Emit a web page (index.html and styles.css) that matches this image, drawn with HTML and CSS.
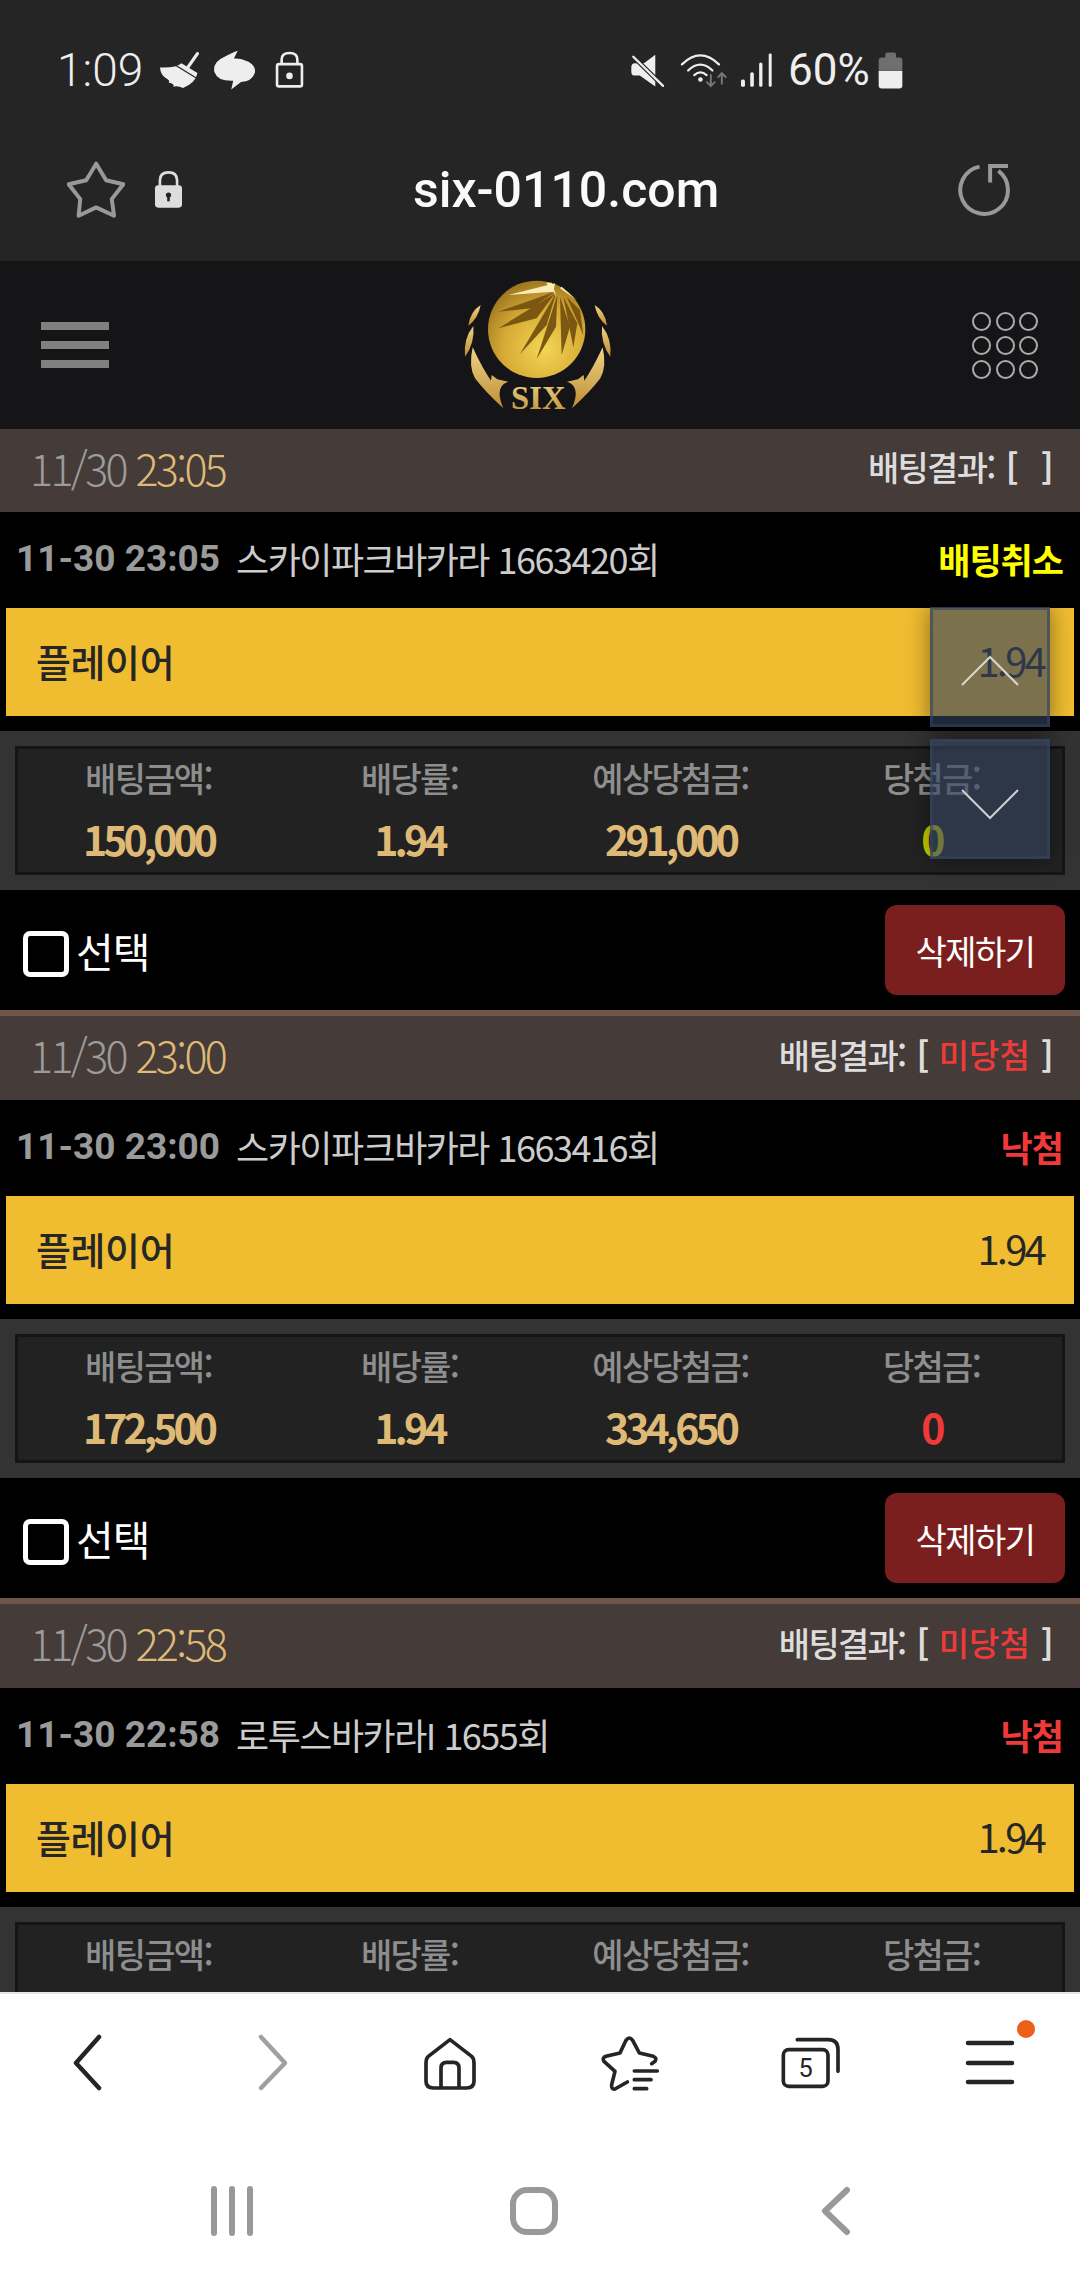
FILE: index.html
```html
<!DOCTYPE html>
<html lang="ko">
<head>
<meta charset="utf-8">
<title>six-0110.com</title>
<link rel="stylesheet" href="styles.css">
</head>
<body>
<div class="screen">
  <header class="chrome">
    <div class="status">
      <span class="clock">1:09</span>
      <svg class="ic-broom" viewBox="475 68 128 116"><path d="M478 118Q530 120 545 105L595 135Q590 165 550 182Q535 175 520 178Q525 170 505 165Q512 160 495 150Q480 140 478 118Z" fill="#eee"/><path d="M595 75L565 118" stroke="#eee" stroke-width="10" stroke-linecap="round"/><path d="M528 112L590 150" stroke="#252525" stroke-width="4"/></svg>
      <svg class="ic-swirl" viewBox="636 64 132 122"><path d="M712 66L700 90Q720 88 745 100Q770 115 764 135Q755 160 722 162L692 185L698 158Q650 160 640 130Q635 100 670 85Q695 72 712 66Z" fill="#eee"/></svg>
      <svg class="ic-lock" viewBox="820 66 88 116"><rect x="826" y="106" width="76" height="68" rx="6" fill="none" stroke="#eee" stroke-width="8"/><path d="M840 106V92Q840 72 864 72Q888 72 888 92V106" fill="none" stroke="#eee" stroke-width="8"/><circle cx="864" cy="142" r="10" fill="#eee"/></svg>
      <svg class="ic-mute" viewBox="95 70 105 105"><path d="M170 74L135 100H107Q96 100 96 112V126Q96 138 107 138H122L170 172Z" fill="#eee"/><path d="M100 78L194 170" stroke="#252525" stroke-width="14"/><path d="M102 80L194 170" stroke="#eee" stroke-width="7" stroke-linecap="round"/></svg>
      <svg class="ic-wifi" viewBox="240 68 148 112" fill="none" stroke-linecap="round"><g stroke="#eee" stroke-width="7"><path d="M246 105Q303 50 360 105"/><path d="M265 124Q303 88 340 124"/><path d="M284 138Q303 122 322 138"/></g><circle cx="303" cy="152" r="7" fill="#eee"/><g stroke="#777" stroke-width="6"><path d="M335 138V172M323 160L335 172L347 160"/><path d="M369 165V132M358 144L369 132L381 144"/></g></svg>
      <svg class="ic-signal" viewBox="415 70 100 102" fill="#eee"><rect x="418" y="150" width="12" height="22" rx="5"/><rect x="446" y="128" width="11" height="44" rx="5"/><rect x="473" y="98" width="10" height="74" rx="5"/><rect x="502" y="71" width="9" height="101" rx="4"/></svg>
      <span class="batt-text">60%</span>
      <svg class="ic-batt" viewBox="830 68 75 110"><path d="M832 122V92Q832 84 842 84H852V74Q852 69 858 69H878Q884 69 884 74V84H894Q903 84 903 92V122Z" fill="#6f6f6f"/><path d="M832 124H903V168Q903 177 894 177H841Q832 177 832 168Z" fill="#eee"/></svg>
    </div>
    <div class="urlbar">
      <svg class="ic-star" viewBox="200 390 175 175"><path d="M288 398L318 448L370 460L335 505L342 555L288 530L235 555L240 505L205 460L258 448Z" fill="none" stroke="#999" stroke-width="12" stroke-linejoin="round"/></svg>
      <svg class="ic-padlock" viewBox="460 420 88 116"><path d="M478 470V450Q478 426 504 426Q530 426 530 450V470" fill="none" stroke="#ddd" stroke-width="8"/><rect x="463" y="465" width="82" height="68" rx="10" fill="#ddd"/><circle cx="504" cy="495" r="8" fill="#252525"/><rect x="500" y="495" width="8" height="19" fill="#252525"/></svg>
      <span class="url">six-0110.com</span>
      <svg class="ic-reload" viewBox="1072 398 160 158" fill="none" stroke="#999" stroke-width="12"><path d="M1140 408A72 72 0 1 0 1197 421"/><path d="M1226 406H1172V456"/></svg>
    </div>
  </header>

  <main class="content">
    <div class="sitehead">
      <div class="burger"><i></i><i></i><i></i></div>
      <svg class="logo" viewBox="0 3 723 504">
        <defs>
          <radialGradient id="gb" cx="58%" cy="70%" r="78%"><stop offset="0" stop-color="#f3d655"/><stop offset=".55" stop-color="#d6aa34"/><stop offset="1" stop-color="#8f6a1a"/></radialGradient>
          <linearGradient id="gg" x1="0" y1="0" x2="0" y2="1"><stop offset="0" stop-color="#efd283"/><stop offset="1" stop-color="#bd8f36"/></linearGradient>
          <g id="wing"><path d="M182 135Q150 155 145 197Q175 175 182 135Z"/><path d="M160 198Q130 235 135 290Q165 250 160 198Z"/><path d="M158 262Q145 320 165 355Q195 395 250 445Q235 410 240 390Q245 370 265 365L232 358L215 345L213 362Q190 330 158 262Z"/></g>
        </defs>
        <circle cx="350" cy="208" r="146" fill="url(#gb)"/>
        <g fill="#f9ecb6"><path d="M405 70L265 105L400 95Z"/><path d="M420 85L470 120L425 80Z"/><path d="M378 68L410 110L395 68Z"/></g>
        <g fill="#7c5712"><path d="M405 95L235 155L335 145Z"/><path d="M405 100L235 205L350 175Z"/><path d="M408 100L300 282L380 195Z"/><path d="M412 105L350 297L408 200Z"/><path d="M420 110L425 285L450 200Z"/><path d="M430 110L460 262L472 190Z"/><path d="M440 110L490 225L480 150Z"/></g>
        <use href="#wing" fill="url(#gg)"/>
        <use href="#wing" fill="url(#gg)" transform="translate(706 0) scale(-1 1)"/>
        <text class="logo-text" x="355" y="447" text-anchor="middle" fill="url(#gg)">SIX</text>
      </svg>
      <div class="dots"><i></i><i></i><i></i><i></i><i></i><i></i><i></i><i></i><i></i></div>
    </div>

    <section class="bet">
      <div class="bet-head">
        <div class="when">11/30 <b>23:05</b></div>
        <div class="result">배팅결과: <span class="br">[</span><span class="res-gap"></span><span class="br">]</span></div>
      </div>
      <div class="bet-row">
        <div class="game"><b>11-30 23:05</b><span>스카이파크바카라 1663420회</span></div>
        <div class="state cancel">배팅취소</div>
      </div>
      <div class="pick"><span>플레이어</span><span class="odds">1.94</span></div>
      <div class="panel"><div class="grid">
        <div class="cell"><span class="lab">배팅금액:</span><span class="val">150,000</span></div>
        <div class="cell"><span class="lab">배당률:</span><span class="val">1.94</span></div>
        <div class="cell"><span class="lab">예상당첨금:</span><span class="val">291,000</span></div>
        <div class="cell"><span class="lab">당첨금:</span><span class="val zero-y">0</span></div>
      </div></div>
      <div class="actions">
        <div class="select"><i class="check"></i><span>선택</span></div>
        <div class="del">삭제하기</div>
      </div>
    </section>

    <section class="bet">
      <div class="bet-head">
        <div class="when">11/30 <b>23:00</b></div>
        <div class="result">배팅결과: <span class="br">[</span><em>미당첨</em><span class="br">]</span></div>
      </div>
      <div class="bet-row">
        <div class="game"><b>11-30 23:00</b><span>스카이파크바카라 1663416회</span></div>
        <div class="state lost">낙첨</div>
      </div>
      <div class="pick"><span>플레이어</span><span class="odds">1.94</span></div>
      <div class="panel"><div class="grid">
        <div class="cell"><span class="lab">배팅금액:</span><span class="val">172,500</span></div>
        <div class="cell"><span class="lab">배당률:</span><span class="val">1.94</span></div>
        <div class="cell"><span class="lab">예상당첨금:</span><span class="val">334,650</span></div>
        <div class="cell"><span class="lab">당첨금:</span><span class="val zero-r">0</span></div>
      </div></div>
      <div class="actions">
        <div class="select"><i class="check"></i><span>선택</span></div>
        <div class="del">삭제하기</div>
      </div>
    </section>

    <section class="bet">
      <div class="bet-head">
        <div class="when">11/30 <b>22:58</b></div>
        <div class="result">배팅결과: <span class="br">[</span><em>미당첨</em><span class="br">]</span></div>
      </div>
      <div class="bet-row">
        <div class="game"><b>11-30 22:58</b><span>로투스바카라I 1655회</span></div>
        <div class="state lost">낙첨</div>
      </div>
      <div class="pick"><span>플레이어</span><span class="odds">1.94</span></div>
      <div class="panel"><div class="grid">
        <div class="cell"><span class="lab">배팅금액:</span></div>
        <div class="cell"><span class="lab">배당률:</span></div>
        <div class="cell"><span class="lab">예상당첨금:</span></div>
        <div class="cell"><span class="lab">당첨금:</span></div>
      </div></div>
    </section>

    <button class="scroll up"><svg viewBox="0 0 114 114"><path d="M29 75L57 47L85 75" fill="none" stroke="#d8d8d0" stroke-width="2"/></svg></button>
    <button class="scroll down"><svg viewBox="0 0 114 114"><path d="M29 48L57 76L85 48" fill="none" stroke="#d0d0d0" stroke-width="2"/></svg></button>
  </main>

  <nav class="toolbar">
    <svg class="tb shift-r" viewBox="0 0 60 60"><path d="M26 4L3 30L26 55" fill="none" stroke="#252525" stroke-width="4.5" stroke-linecap="round" stroke-linejoin="round"/></svg>
    <svg class="tb" viewBox="0 0 60 60"><path d="M21 4L45 30L21 55" fill="none" stroke="#a0a0a0" stroke-width="4.5" stroke-linecap="round" stroke-linejoin="round"/></svg>
    <svg class="tb" viewBox="1260 100 180 180"><path d="M1350 120L1415 170Q1422 176 1422 190V245Q1422 265 1400 265H1300Q1278 265 1278 245V190Q1278 176 1285 170Z" fill="none" stroke="#252525" stroke-width="11" stroke-linejoin="round"/><path d="M1323 262V205Q1323 188 1340 188H1360Q1377 188 1377 205V262" fill="none" stroke="#252525" stroke-width="11"/></svg>
    <svg class="tb" viewBox="300 100 180 180" fill="none" stroke="#252525" stroke-width="11" stroke-linecap="round" stroke-linejoin="round"><path d="M382 247L345 268Q333 270 335 255L345 215L312 185Q305 175 318 170L360 160L378 122Q388 108 398 122L418 160L460 170Q472 175 465 185L455 192"/><path d="M403 214H472M403 240H453M403 267H440"/></svg>
    <svg class="tb" viewBox="840 105 180 180"><rect x="850" y="155" width="134" height="110" rx="16" fill="none" stroke="#252525" stroke-width="11"/><path d="M892 125H985Q1014 125 1014 155V220" fill="none" stroke="#252525" stroke-width="11" stroke-linecap="round"/><text class="tab-num" x="917" y="236" text-anchor="middle" fill="#252525">5</text></svg>
    <div class="menu"><svg class="tb" viewBox="0 0 60 60"><path d="M8 10H52M8 30H52M8 49H52" stroke="#252525" stroke-width="4.5" stroke-linecap="round"/></svg><i class="badge"></i></div>
  </nav>

  <nav class="sysnav">
    <svg class="sys" viewBox="0 0 60 60"><path d="M12 8V52M30 8V52M48 8V52" stroke="#999" stroke-width="6" stroke-linecap="round"/></svg>
    <svg class="sys" viewBox="0 0 60 60"><rect x="9" y="9" width="42" height="42" rx="14" fill="none" stroke="#999" stroke-width="6"/></svg>
    <svg class="sys" viewBox="0 0 60 60"><path d="M41 9L19 30L41 51" fill="none" stroke="#999" stroke-width="6" stroke-linecap="round" stroke-linejoin="round"/></svg>
  </nav>
</div>
</body>
</html>
```
FILE: styles.css
```css
* { box-sizing: border-box; }
html, body { margin: 0; padding: 0; }
body { background: #000; font-family: "Noto Sans CJK KR", "Noto Sans", sans-serif; }
svg { display: block; flex: none; }

.screen { width: 1080px; height: 2280px; display: flex; flex-direction: column; overflow: hidden; position: relative; }

/* browser chrome */
.chrome { background: #252525; height: 261px; flex: none; }
.status { height: 130px; padding: 10px 0 0 57px; display: flex; align-items: center; color: #eee; font-family: Roboto, sans-serif; font-weight: 300; font-size: 46px; }
.clock { width: 102px; }
.ic-broom { width: 41px; height: 38px; }
.ic-swirl { width: 43px; height: 40px; margin-left: 13px; }
.ic-lock { width: 29px; height: 38px; margin-left: 19px; }
.ic-mute { width: 34px; height: 35px; margin-left: 327px; }
.ic-wifi { width: 48px; height: 37px; margin-left: 15px; }
.ic-signal { width: 33px; height: 34px; margin-left: 12px; }
.batt-text { width: 90px; margin-left: 15px; font-weight: 400; font-size: 44px; }
.ic-batt { width: 25px; height: 37px; }

.urlbar { height: 131px; padding-bottom: 12px; display: flex; align-items: center; padding-left: 67px; padding-right: 70px; }
.ic-star { width: 58px; height: 58px; }
.ic-padlock { width: 29px; height: 39px; margin-left: 29px; }
.url { margin-left: 230px; color: #fafafa; font-family: Roboto, sans-serif; font-weight: 500; font-size: 50px; }
.ic-reload { width: 53px; height: 53px; margin-left: auto; }

/* page */
.content { flex: 1; min-height: 0; overflow: hidden; position: relative; background: #000; }
.sitehead { height: 168px; background: #151518; display: grid; grid-template-columns: 68px 1fr 66px; align-items: center; padding: 0 42px 0 41px; }
.burger { display: flex; flex-direction: column; gap: 11px; }
.burger i { display: block; height: 8px; background: #808080; }
.logo { width: 241px; height: 168px; justify-self: center; }
.logo-text { font-family: "Liberation Serif", serif; font-weight: 700; font-size: 98px; }
.dots { display: grid; grid-template-columns: repeat(3, 19px); gap: 5px 4.5px; }
.dots i { display: block; height: 19px; border: 2.5px solid #aaa; border-radius: 50%; }

.bet { border-top: 6px solid #705648; }
.bet:first-of-type { border-top: 0; }
.bet-head { height: 84px; background: #453b39; display: flex; align-items: center; justify-content: space-between; padding: 0 28px 8px 30px; }
.bet:first-of-type .bet-head { height: 83px; }
.when { font-size: 43px; letter-spacing: -2.6px; font-weight: 300; color: #9c9c9c; }
.when b { font-weight: 300; color: #dfba76; }
.result { display: flex; align-items: center; font-size: 34px; font-weight: 500; letter-spacing: -1.7px; color: #ddd; }
.result em { font-style: normal; color: #f03a3a; margin: 0 11px; letter-spacing: 0; font-size: 33px; }
.res-gap { width: 13px; }
.br { margin-left: 11px; color: #ddd; font-weight: 700; }
.result em + .br { margin-left: 0; }

.bet-row { height: 96px; display: flex; align-items: center; justify-content: space-between; padding: 0 17px 4px 16px; }
.game { display: flex; align-items: center; }
.game b { font-family: Roboto, sans-serif; font-weight: 700; font-size: 37px; color: #9a9a9a; }
.game span { margin-left: 16px; font-size: 36px; letter-spacing: -1.5px; color: #ccc; }
.state { font-size: 35px; font-weight: 700; letter-spacing: -1px; }
.cancel { color: #ff0; }
.lost { color: #f03a3a; }

.pick { height: 108px; margin: 0 6px; background: #f0bd31; display: flex; align-items: center; justify-content: space-between; padding: 0 30px 4px 30px; color: #262626; font-size: 38px; font-weight: 500; letter-spacing: -.4px; }
.odds { font-size: 40px; font-weight: 400; letter-spacing: -2.8px; }
.panel { margin-top: 15px; height: 159px; background: #333; padding: 15px; }
.grid { height: 129px; background: #222; border: 3px solid #151515; display: grid; grid-template-columns: repeat(4, 1fr); }
.cell { display: flex; flex-direction: column; align-items: center; }
.lab { margin-top: -1px; height: 60px; line-height: 60px; font-size: 34px; font-weight: 500; letter-spacing: -1.7px; color: #8e8e8e; }
.val { height: 60px; line-height: 60px; font-size: 41px; font-weight: 700; letter-spacing: -3.9px; color: #dfba76; }
.zero-y { color: #cfcf00; }
.zero-r { color: #f03a3a; }

.actions { height: 120px; display: flex; align-items: center; justify-content: space-between; padding: 0 15px 0 23px; }
.select { display: flex; align-items: center; color: #fff; font-size: 41px; }
.check { display: block; width: 46px; height: 46px; border: 5px solid #fff; border-radius: 7px; margin-top: 8px; }
.select span { margin-left: 7px; letter-spacing: -1px; }
.del { width: 180px; height: 90px; background: #7a1f1e; border-radius: 12px; display: flex; align-items: center; justify-content: center; color: #fff; font-size: 34px; letter-spacing: -1.5px; }

/* floating scroll buttons over the page */
.scroll { position: absolute; left: 930px; width: 120px; height: 120px; padding: 0; background: rgba(52, 68, 95, .62); border: 3px solid rgba(52, 68, 95, .6); box-shadow: 0 0 22px rgba(0, 0, 0, .45); }
.scroll svg { width: 114px; height: 114px; }
.up { top: 346px; }
.down { top: 478px; }

/* browser toolbar */
.toolbar { height: 155px; flex: none; background: #fff; border-top: 2px solid #e6e6e6; display: grid; grid-template-columns: repeat(6, 180px); align-items: center; justify-items: center; padding-bottom: 15px; }
.tb { width: 60px; height: 60px; }
.shift-r { margin-left: 26px; }
.menu { position: relative; }
.badge { position: absolute; left: 57px; top: -13px; width: 18px; height: 18px; background: #ec5f18; border-radius: 50%; }
.sysnav { height: 133px; flex: none; background: #fff; display: grid; grid-template-columns: repeat(3, 302px); justify-content: center; justify-items: center; align-items: center; padding: 0 12px 6px 0; }
.sys { width: 60px; height: 60px; }
.tab-num { font-family: Roboto, sans-serif; font-size: 76px; }
```
